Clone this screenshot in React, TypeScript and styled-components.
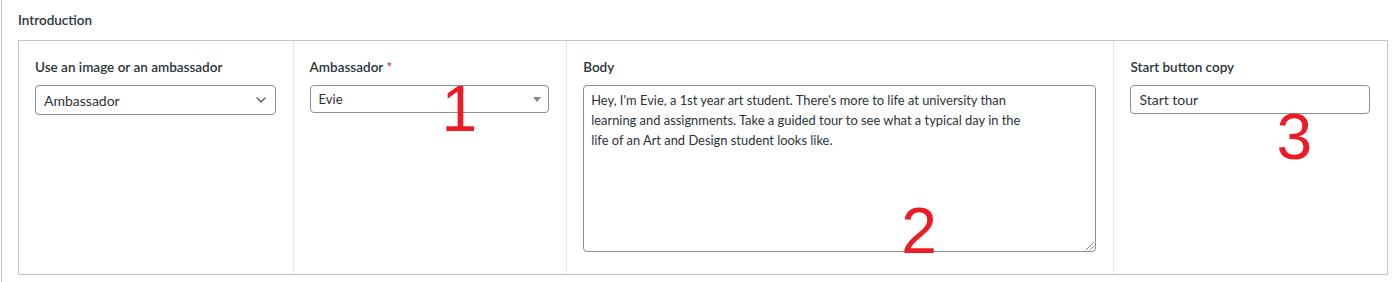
import React from "react";
import styled, { createGlobalStyle } from "styled-components";
import { FiChevronDown } from "react-icons/fi";

const GlobalStyle = createGlobalStyle`
  body {
    margin: 0;
    background: #fff;
    font-family: Lato, "Segoe UI", Arial, sans-serif;
    color: #1d2327;
  }
`;

const App = () => {
  return (
    <>
      <GlobalStyle />
      <StylePage>
        <StyleTitle>Introduction</StyleTitle>
        <StyleBox>
          <StyleColumn>
            <StyleLabel>Use an image or an ambassador</StyleLabel>
            <StyleSelect>
              <span>Ambassador</span>
              <StyleChevron>
                <FiChevronDown />
              </StyleChevron>
            </StyleSelect>
          </StyleColumn>
          <StyleColumn>
            <StyleLabel>
              Ambassador <StyleRequired>*</StyleRequired>
            </StyleLabel>
            <StyleCombo>
              <span>Evie</span>
              <StyleCaret />
            </StyleCombo>
            <StyleNumber $top={36} $left={148}>
              1
            </StyleNumber>
          </StyleColumn>
          <StyleColumn>
            <StyleLabel>Body</StyleLabel>
            <StyleTextarea>
              <StyleTextareaText>
                Hey, I'm Evie, a 1st year art student. There's more to life at
                university than learning and assignments. Take a guided tour to
                see what a typical day in the life of an Art and Design student
                looks like.
              </StyleTextareaText>
              <StyleGrip />
            </StyleTextarea>
            <StyleNumber $top={158} $left={334}>
              2
            </StyleNumber>
          </StyleColumn>
          <StyleColumn>
            <StyleLabel>Start button copy</StyleLabel>
            <StyleInput>Start tour</StyleInput>
            <StyleNumber $top={64} $left={162}>
              3
            </StyleNumber>
          </StyleColumn>
        </StyleBox>
      </StylePage>
    </>
  );
};

const StylePage = styled.div`
  border-left: 1px solid #c3c4c7;
  margin-left: 1px;
  padding: 12px 8px 6px 16px;
  height: 282px;
  box-sizing: border-box;
`;

const StyleTitle = styled.div`
  font-size: 13.5px;
  font-weight: 600;
  line-height: 16px;
  margin-bottom: 12px;
  color: #2c3338;
`;

const StyleBox = styled.div`
  display: grid;
  grid-template-columns: 1fr 1fr 2fr 1fr;
  border: 1px solid #c3c4c7;
  height: 235px;
  box-sizing: border-box;
`;

const StyleColumn = styled.div`
  position: relative;
  padding: 18px 17px 0 16px;
  border-left: 1px solid #e6e6e6;
  &:first-child {
    border-left: none;
  }
`;

const StyleLabel = styled.div`
  font-size: 13.5px;
  font-weight: 600;
  line-height: 16px;
  margin-bottom: 10px;
  color: #2c3338;
`;

const StyleRequired = styled.span`
  color: #d63638;
`;

const StyleSelect = styled.div`
  display: flex;
  align-items: center;
  justify-content: space-between;
  height: 30px;
  box-sizing: border-box;
  border: 1px solid #8c8f94;
  border-radius: 4px;
  padding: 0 6px 0 8px;
  font-size: 14px;
  color: #2c3338;
`;

const StyleChevron = styled.span`
  display: flex;
  font-size: 16px;
  color: #50575e;
`;

const StyleCombo = styled.div`
  display: flex;
  align-items: center;
  justify-content: space-between;
  height: 28px;
  box-sizing: border-box;
  border: 1px solid #8c8f94;
  border-radius: 4px;
  padding: 0 7px 0 8px;
  font-size: 13px;
  color: #2c3338;
`;

const StyleCaret = styled.span`
  width: 0;
  height: 0;
  border-left: 4px solid transparent;
  border-right: 4px solid transparent;
  border-top: 5px solid #888;
`;

const StyleTextarea = styled.div`
  position: relative;
  height: 167px;
  box-sizing: border-box;
  border: 1px solid #8c8f94;
  border-radius: 4px;
  padding: 4px 8px 4px 7px;
  font-size: 12.9px;
  line-height: 20px;
  color: #2c3338;
`;

const StyleTextareaText = styled.div`
  max-width: 446px;
`;

const StyleGrip = styled.span`
  position: absolute;
  right: 1px;
  bottom: 1px;
  width: 8px;
  height: 8px;
  background: linear-gradient(
    135deg,
    transparent 45%,
    #888 45%,
    #888 52%,
    transparent 52%,
    transparent 70%,
    #888 70%,
    #888 77%,
    transparent 77%
  );
`;

const StyleInput = styled.div`
  display: flex;
  align-items: center;
  height: 29px;
  box-sizing: border-box;
  border: 1px solid #8c8f94;
  border-radius: 4px;
  padding: 0 8px;
  font-size: 14px;
  color: #2c3338;
`;

const StyleNumber = styled.span<{ $top: number; $left: number }>`
  position: absolute;
  top: ${(p) => p.$top}px;
  left: ${(p) => p.$left}px;
  font-family: "Liberation Sans", Arial, sans-serif;
  font-size: 64px;
  line-height: 64px;
  color: #ed1c24;
`;

export default App;
